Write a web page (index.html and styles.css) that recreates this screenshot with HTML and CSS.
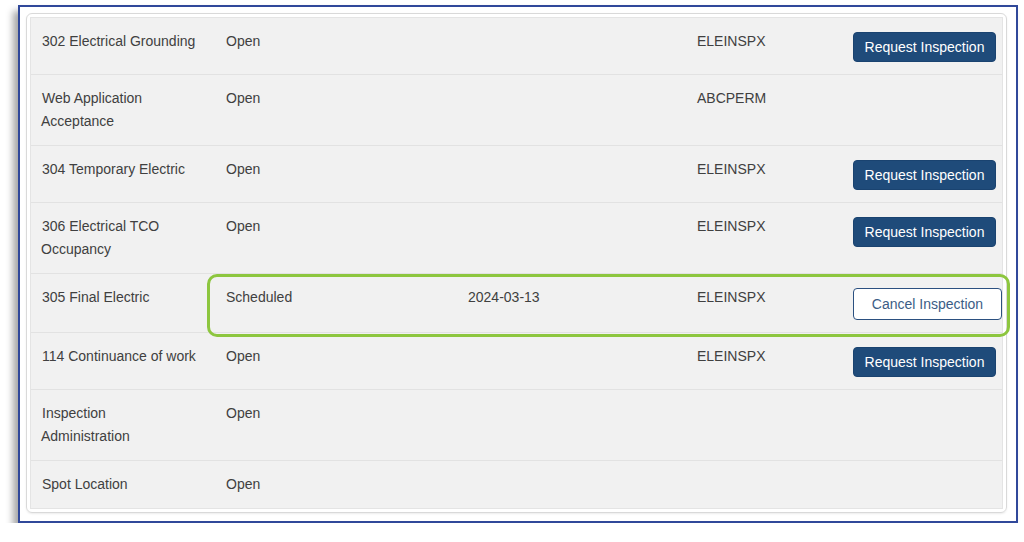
FILE: index.html
```html
<!DOCTYPE html>
<html lang="en">
<head>
<meta charset="utf-8">
<title>Inspections</title>
<link rel="stylesheet" href="styles.css">
</head>
<body>
<div class="frame">
  <div class="card">
    <div class="table">
      <div class="row">
        <div class="cell name">302 Electrical Grounding</div>
        <div class="cell">Open</div>
        <div class="cell"></div>
        <div class="cell">ELEINSPX</div>
        <div class="cell"><button class="btn btn-primary">Request Inspection</button></div>
      </div>
      <div class="row">
        <div class="cell name">Web Application<br>Acceptance</div>
        <div class="cell">Open</div>
        <div class="cell"></div>
        <div class="cell">ABCPERM</div>
        <div class="cell"></div>
      </div>
      <div class="row">
        <div class="cell name">304 Temporary Electric</div>
        <div class="cell">Open</div>
        <div class="cell"></div>
        <div class="cell">ELEINSPX</div>
        <div class="cell"><button class="btn btn-primary">Request Inspection</button></div>
      </div>
      <div class="row">
        <div class="cell name">306 Electrical TCO<br>Occupancy</div>
        <div class="cell">Open</div>
        <div class="cell"></div>
        <div class="cell">ELEINSPX</div>
        <div class="cell"><button class="btn btn-primary">Request Inspection</button></div>
      </div>
      <div class="row highlighted">
        <div class="cell name">305 Final Electric</div>
        <div class="cell">Scheduled</div>
        <div class="cell">2024-03-13</div>
        <div class="cell">ELEINSPX</div>
        <div class="cell"><button class="btn btn-outline">Cancel Inspection</button></div>
        <div class="highlight"></div>
      </div>
      <div class="row">
        <div class="cell name">114 Continuance of work</div>
        <div class="cell">Open</div>
        <div class="cell"></div>
        <div class="cell">ELEINSPX</div>
        <div class="cell"><button class="btn btn-primary">Request Inspection</button></div>
      </div>
      <div class="row">
        <div class="cell name">Inspection<br>Administration</div>
        <div class="cell">Open</div>
        <div class="cell"></div>
        <div class="cell"></div>
        <div class="cell"></div>
      </div>
      <div class="row">
        <div class="cell name">Spot Location</div>
        <div class="cell">Open</div>
        <div class="cell"></div>
        <div class="cell"></div>
        <div class="cell"></div>
      </div>
    </div>
  </div>
</div>
</body>
</html>
```

FILE: styles.css
```css
* { box-sizing: border-box; }

html, body {
  margin: 0;
  padding: 0;
  background: #ffffff;
}

body {
  font-family: "Liberation Sans", Arial, sans-serif;
  font-size: 14px;
  color: #404040;
}

.frame {
  position: relative;
  margin: 5px 0 0 18px;
  width: 1000px;
  height: 518px;
  border: 2px solid #30489a;
  background: #ffffff;
  padding: 6px 9px 8px 6px;
  box-shadow: -5px 6px 7px rgba(0, 0, 0, 0.35);
}

.card {
  border: 1px solid #d9d9d9;
  border-radius: 6px;
  padding: 3px;
  box-shadow: 0 1px 2px rgba(0, 0, 0, 0.08);
}

.table {
  background: #f1f1f1;
  border: 1px solid #e4e4e4;
}

.row {
  position: relative;
  display: grid;
  grid-template-columns: 185px 242px 229px 156px 1fr;
  border-top: 1px solid #e2e2e2;
}

.row:first-child {
  border-top: none;
}

.cell {
  padding: 12px 10px 12px;
  line-height: 23px;
}

.cell.name {
  text-indent: 1px;
}

.btn {
  display: block;
  margin-top: 2px;
  height: 30px;
  padding: 0;
  border-radius: 4px;
  font-family: "Liberation Sans", Arial, sans-serif;
  font-size: 14px;
  line-height: 1;
  cursor: pointer;
}

.btn-primary {
  width: 143px;
  background: #1f4b7a;
  border: 1px solid #1a4370;
  color: #ffffff;
}

.btn-outline {
  width: 149px;
  height: 32px;
  margin-top: 2px;
  background: #ffffff;
  border: 1.5px solid #2b5080;
  color: #3b5d86;
}

.highlight {
  position: absolute;
  z-index: 1;
  left: 176px;
  right: -8px;
  top: 0;
  bottom: -5px;
  border: 3.5px solid #8dc63f;
  border-radius: 10px;
  pointer-events: none;
}
```
